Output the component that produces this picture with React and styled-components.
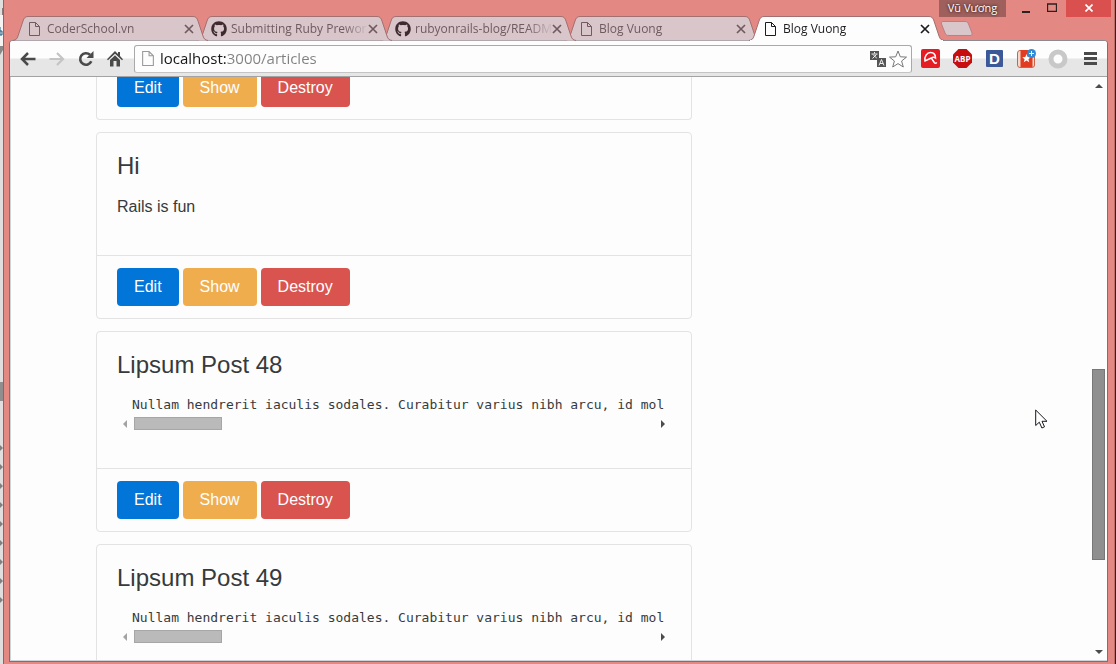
import React from "react";
import styled, { createGlobalStyle } from "styled-components";
import { FaGithub } from "react-icons/fa";

const GlobalStyle = createGlobalStyle`
  * { box-sizing: border-box; }
  body { margin: 0; background: #e0dfdf; }
  button { font: inherit; cursor: pointer; }
`;

const uiFont = `"Open Sans", "Noto Sans", sans-serif`;

const Desktop = styled.div`
  display: grid;
  grid-template-columns: 3px minmax(0, 1fr) 1px;
  height: 100vh;
  overflow: hidden;
`;

const DesktopEdge = styled.div`
  background: ${(p) => (p.$dark ? "#35201f" : "#e0dfdf")};
  overflow: hidden;
`;

const Window = styled.div`
  position: relative;
  display: flex;
  flex-direction: column;
  min-width: 0;
  min-height: 0;
  background: #e38882;
  border-left: 1px solid #9b605c;
  border-right: 1px solid #c06c67;
  padding: 0 6px 2px 5px;
`;

const TitleBar = styled.header`
  flex: none;
  height: 40px;
`;

const TabList = styled.nav`
  display: flex;
  padding: 16px 0 0 4px;
`;

const TabItem = styled.div`
  position: relative;
  z-index: ${(p) => p.$layer};
  display: flex;
  flex: none;
  align-items: center;
  width: 195px;
  height: 25px;
  margin-right: -11px;
  padding: 0 13px 0 16px;
  color: ${(p) => (p.$active ? "#1c1c1c" : "#6f5a5f")};
`;

const TabShape = styled.svg`
  position: absolute;
  inset: 0;
`;

const TabTitle = styled.button`
  position: relative;
  display: flex;
  flex: 1;
  align-items: center;
  min-width: 0;
  height: 24px;
  padding: 0;
  border: 0;
  background: none;
  color: inherit;
  font: 12px/16px ${uiFont};
  white-space: nowrap;
`;

const TabIcon = styled.span`
  display: flex;
  flex: none;
  width: 18px;
  margin-left: ${(p) => (p.$wide ? "-2px" : "0")};
  margin-right: ${(p) => (p.$wide ? "2px" : "0")};
  color: ${(p) => (p.$wide ? "#3d2b2f" : "inherit")};
`;

const TabLabel = styled.span`
  flex: 1;
  overflow: hidden;
  text-align: left;
  mask-image: linear-gradient(to right, #000 112px, transparent 138px);
`;

const TabClose = styled.button`
  position: relative;
  display: flex;
  flex: none;
  width: 12px;
  height: 12px;
  padding: 1px;
  border: 0;
  background: none;
  color: inherit;
`;

const NewTab = styled.button`
  display: flex;
  width: 34px;
  height: 16px;
  margin: 5px 0 0 7px;
  padding: 0;
  border: 0;
  background: none;
`;

const WindowControls = styled.div`
  position: absolute;
  top: 0;
  right: 3px;
  display: flex;
  height: 17px;
`;

const UserBadge = styled.button`
  width: 67px;
  margin-right: 7px;
  padding: 0 0 2px;
  border: 0;
  background: #9f5f5c;
  color: #fff;
  font: 11px/15px ${uiFont};
  text-shadow: 0 0 3px #000;
  white-space: nowrap;
`;

const ControlButton = styled.button`
  display: flex;
  align-items: center;
  justify-content: center;
  width: ${(p) => (p.$danger ? "45px" : "26px")};
  margin-left: ${(p) => (p.$danger ? "1px" : "0")};
  padding: 0 0 2px;
  border: 0;
  background: ${(p) => (p.$danger ? "#d9504e" : "transparent")};
`;

const Frame = styled.div`
  display: flex;
  flex: 1;
  flex-direction: column;
  min-height: 0;
  border: 1px solid #8d6a69;
  border-radius: 4px 4px 0 0;
  border-top-color: #8b8a90;
  background: #fdfdfd;
`;

const Toolbar = styled.div`
  display: flex;
  flex: none;
  align-items: center;
  height: 36px;
  padding: 0 7px 0 8px;
  border-bottom: 1px solid #a3a3a3;
  border-radius: 3px 3px 0 0;
  background: linear-gradient(#fdfdfd 17px, #e6e6e6 18px);
`;

const NavButtons = styled.div`
  display: flex;
  gap: 9px;
  margin-right: 9px;
`;

const IconButton = styled.button`
  display: flex;
  align-items: center;
  justify-content: center;
  width: 20px;
  height: 20px;
  padding: 0;
  border: 0;
  background: none;
`;

const AddressBar = styled.div`
  display: flex;
  flex: 1;
  align-items: center;
  height: 28px;
  padding: 0 3px 0 7px;
  border: 1px solid #a9a9a9;
  border-bottom-color: #c4c4c4;
  border-radius: 3px;
  background: #fdfdfd;
`;

const AddressInput = styled.input`
  flex: 1;
  min-width: 0;
  height: 24px;
  margin-left: 6px;
  padding: 0 0 2px;
  border: 0;
  outline: 0;
  font: 15px/22px ${uiFont};
  background: linear-gradient(to right, #161616 67px, #808080 67px);
  background-clip: text;
  color: transparent;
`;

const Extensions = styled.div`
  display: flex;
  gap: 12px;
  margin-left: 8px;
`;

const Viewport = styled.div`
  display: flex;
  flex: 1;
  min-height: 0;
  border-left: 1px solid #ccd5d8;
  border-bottom: 1px solid #ccd5d8;
`;

const Page = styled.main`
  position: relative;
  flex: 1;
  min-width: 0;
  overflow: hidden;
  color: #373a3c;
  font: 16px/25px "Liberation Sans", Arial, sans-serif;
`;

const Container = styled.div`
  max-width: 940px;
  margin: 0 auto;
`;

const Articles = styled.div`
  display: flex;
  flex-direction: column;
  gap: 12px;
  width: calc(100% * 2 / 3);
  margin-top: -21px;
  padding: 0 16px 0 15px;
`;

const Card = styled.article`
  border: 1px solid #e3e3e3;
  border-top-width: ${(p) => (p.$partial ? "0" : "1px")};
  border-radius: 4px;
`;

const CardBody = styled.div`
  padding: 20px 20px 36px;
`;

const CardTitle = styled.h2`
  margin: 0 0 15px;
  font-size: 24px;
  font-weight: 400;
  line-height: 26px;
`;

const CardText = styled.p`
  margin: 0;
`;

const CodeBlock = styled.pre`
  margin: 0;
  padding: 2px 0 0 15px;
  overflow: hidden;
  font: 13px/20px "DejaVu Sans Mono", monospace;
`;

const HorizontalScroll = styled.div`
  display: flex;
  align-items: center;
  height: 17px;
`;

const ScrollTrack = styled.div`
  flex: 1;
`;

const HorizontalThumb = styled.div`
  width: 88px;
  height: 13px;
  border: 1px solid #a6a6a6;
  background: #bababa;
`;

const ScrollArrow = styled.button`
  display: flex;
  flex: none;
  align-items: center;
  justify-content: center;
  width: 17px;
  height: 17px;
  padding: 0;
  border: 0;
  background: none;
`;

const CardFooter = styled.footer`
  display: flex;
  gap: 4px;
  padding: 12px 20px;
  border-top: 1px solid #e3e3e3;
`;

const tones = { edit: "#0275d8", show: "#f0ad4e", destroy: "#d9534f" };

const ActionButton = styled.button`
  height: 38px;
  padding: 0 17px 2px;
  border: 0;
  border-radius: 4px;
  background: ${(p) => tones[p.$tone]};
  color: #fff;
`;

const VerticalScroll = styled.div`
  display: flex;
  flex: none;
  flex-direction: column;
  align-items: center;
  width: 16px;
`;

const VerticalTrack = styled.div`
  display: flex;
  flex: 1;
  flex-direction: column;
  padding-right: 1px;
`;

const TrackSpace = styled.div`
  flex: ${(p) => p.$share};
`;

const VerticalThumb = styled.div`
  flex: 190;
  width: 13px;
  border: 1px solid #777;
  background: #8f8f8f;
`;

const Cursor = styled.svg`
  position: absolute;
  left: 1024px;
  top: 332px;
`;

function DocIcon() {
  return (
    <svg width="11" height="14" viewBox="0 0 11 14" fill="none" stroke="currentColor">
      <path d="M.5.5h6l4 4v9H.5zM6.5.5v4h4" />
    </svg>
  );
}

function Tab({ title, github, active, layer }) {
  return (
    <TabItem $active={active} $layer={layer}>
      <TabShape width="195" height="25" viewBox="0 0 195 25" aria-hidden="true">
        <path
          d="M0 24.5C3 24 4 23 5 20L10 5C11 2 12 .5 15 .5H180C183 .5 184 2 185 5L190 20C191 23 192 24 195 24.5"
          fill={active ? "#fdfdfd" : "#d8c6cb"}
          stroke="#a36f70"
        />
        {active && <path d="M1 24.5H194" stroke="#fdfdfd" />}
      </TabShape>
      <TabTitle>
        <TabIcon $wide={github}>{github ? <FaGithub size={16} /> : <DocIcon />}</TabIcon>
        <TabLabel>{title}</TabLabel>
      </TabTitle>
      <TabClose aria-label={`Close ${title}`}>
        <svg width="10" height="10" viewBox="0 0 10 10" stroke="currentColor" strokeWidth="1.7">
          <path d="M1 1l8 8M9 1L1 9" />
        </svg>
      </TabClose>
    </TabItem>
  );
}

function Arrow({ direction, color = "#4c4c4c" }) {
  const paths = {
    left: "M6 1v8L2 5z",
    right: "M4 1v8l4-4z",
    up: "M1 7h8L5 3z",
    down: "M1 3h8L5 7z",
  };
  return (
    <ScrollArrow aria-label={`Scroll ${direction}`}>
      <svg width="10" height="10" viewBox="0 0 10 10" fill={color}>
        <path d={paths[direction]} />
      </svg>
    </ScrollArrow>
  );
}

function Actions() {
  return (
    <CardFooter>
      <ActionButton $tone="edit">Edit</ActionButton>
      <ActionButton $tone="show">Show</ActionButton>
      <ActionButton $tone="destroy">Destroy</ActionButton>
    </CardFooter>
  );
}

function Article({ title, text, code, hasActions = true }) {
  return (
    <Card>
      <CardBody>
        <CardTitle>{title}</CardTitle>
        {text && <CardText>{text}</CardText>}
        {code && (
          <>
            <CodeBlock>{code}</CodeBlock>
            <HorizontalScroll>
              <Arrow direction="left" color="#a3a3a3" />
              <ScrollTrack>
                <HorizontalThumb />
              </ScrollTrack>
              <Arrow direction="right" />
            </HorizontalScroll>
          </>
        )}
      </CardBody>
      {hasActions && <Actions />}
    </Card>
  );
}

const tabs = [
  { title: "CoderSchool.vn" },
  { title: "Submitting Ruby Prewor", github: true },
  { title: "rubyonrails-blog/READM", github: true },
  { title: "Blog Vuong" },
  { title: "Blog Vuong", active: true },
];

const lipsum = "Nullam hendrerit iaculis sodales. Curabitur varius nibh arcu, id mol";

const articles = [
  { title: "Hi", text: "Rails is fun" },
  { title: "Lipsum Post 48", code: lipsum },
  { title: "Lipsum Post 49", code: lipsum, hasActions: false },
];

const treeRows = [448, 467, 486, 505, 524, 543, 562, 581, 600];

export default function App() {
  return (
    <Desktop>
      <GlobalStyle />
      <DesktopEdge>
        <svg width="3" height="664" viewBox="0 0 3 664" aria-hidden="true">
          <path d="M2 8h1v8H2z" fill="#8a7a78" />
          <path d="M0 15h3v34H0z" fill="#f4f4f4" />
          <path d="M0 27v8M0 31h2v4H0" stroke="#205a80" fill="none" />
          <path d="M0 46h3v4l-3 5z" fill="#888" />
          <path d="M0 382h3v19H0z" fill="#8f8f8f" />
          {treeRows.map((y) => (
            <path key={y} d={`M0 ${y - 3}l3 3-3 3z`} fill="#808080" />
          ))}
        </svg>
      </DesktopEdge>
      <Window>
        <TitleBar>
          <TabList aria-label="Tabs">
            {tabs.map((tab, i) => (
              <Tab key={i} {...tab} layer={tab.active ? 10 : 6 - i} />
            ))}
            <NewTab aria-label="New tab">
              <svg width="34" height="16" viewBox="0 0 34 16">
                <path
                  d="M3 .5h22c2 0 3 1 3.500 2.500l3.500 9c.5 2-.5 2.500-2 2.500H9c-2 0-3-.5-4-2.500l-3.500-9C1 1.500 1.500 .5 3 .5z"
                  fill="#d8c6cb"
                  stroke="#b98084"
                />
              </svg>
            </NewTab>
          </TabList>
          <WindowControls>
            <UserBadge>Vũ Vương</UserBadge>
            <ControlButton aria-label="Minimize">
              <svg width="10" height="10"><path d="M1 8h8v2H1z" fill="#2c2020" /></svg>
            </ControlButton>
            <ControlButton aria-label="Maximize">
              <svg width="10" height="9"><path d="M.5 1v7.500h9V1M0 1h10" stroke="#2c2020" strokeWidth="1.300" fill="none" /></svg>
            </ControlButton>
            <ControlButton $danger aria-label="Close window">
              <svg width="8" height="8"><path d="M.5.5l7 7m0-7l-7 7" stroke="#fff" strokeWidth="1.700" /></svg>
            </ControlButton>
          </WindowControls>
        </TitleBar>
        <Frame>
          <Toolbar>
            <NavButtons>
              <IconButton aria-label="Back">
                <svg width="16" height="14" fill="none" stroke="#4a4a4a" strokeWidth="2.500"><path d="M15.500 7H2.500M8 1L2 7l6 6" /></svg>
              </IconButton>
              <IconButton aria-label="Forward" disabled>
                <svg width="16" height="14" fill="none" stroke="#c4c4c4" strokeWidth="2.200"><path d="M.5 7h13M8 1l6 6-6 6" /></svg>
              </IconButton>
              <IconButton aria-label="Reload">
                <svg width="16" height="16" viewBox="0 0 16 16">
                  <path d="M13.300 10.300A5.800 5.800 0 1 1 12 3.800" fill="none" stroke="#4a4a4a" strokeWidth="2.600" />
                  <path d="M15.500 0v7h-7z" fill="#4a4a4a" />
                </svg>
              </IconButton>
              <IconButton aria-label="Home">
                <svg width="16" height="16" viewBox="0 0 16 16" fill="#4a4a4a">
                  <path d="M8 0l3 3V1h2v4l3 3.300-1 1L8 2.700 1 9.300l-1-1z" />
                  <path d="M3 9l5-4.700L13 9v6.500H9.500V10h-3v5.500H3z" />
                </svg>
              </IconButton>
            </NavButtons>
            <AddressBar>
              <svg width="12" height="15" viewBox="0 0 11 14" fill="none" stroke="#999"><path d="M.5.5h6l4 4v9H.5zM6.500.5v4h4" /></svg>
              <AddressInput aria-label="Address" defaultValue="localhost:3000/articles" />
              <IconButton aria-label="Translate">
                <svg width="16" height="16" viewBox="0 0 16 16">
                  <path d="M0 0h9v9H0z" fill="#555" />
                  <path d="M4.500 1v1.500M1.500 3h6M3 3.500l4 4M6.500 3.500l-4 4" stroke="#eee" fill="none" />
                  <path d="M7 7h9v9H7z" fill="#555" />
                  <path d="M9 14.500l2.500-6 2.500 6M10 12.500h3" stroke="#eee" fill="none" />
                </svg>
              </IconButton>
              <IconButton aria-label="Bookmark">
                <svg width="18" height="18" viewBox="0 0 18 18" fill="#fff" stroke="#777">
                  <path d="M9 1l2.300 5.800 6.200.3-4.900 3.900 1.700 6L9 13.600 3.700 17l1.700-6L.5 7.100l6.200-.3z" />
                </svg>
              </IconButton>
            </AddressBar>
            <Extensions>
              <IconButton aria-label="Avira">
                <svg width="19" height="19" viewBox="0 0 19 19">
                  <rect width="19" height="19" rx="2" fill="#e51c23" />
                  <path d="M4 12C3 7.500 6 3.500 9.500 3.500s5 2.500 5 5.500c-1.500-1-3-.8-4.200 0L4 12z" fill="none" stroke="#fff" strokeWidth="1.500" />
                  <path d="M10.300 9l3 4.500c.7 1 1.500 1 2.500 0" fill="none" stroke="#fff" strokeWidth="1.500" />
                </svg>
              </IconButton>
              <IconButton aria-label="Adblock Plus">
                <svg width="19" height="19" viewBox="0 0 19 19">
                  <path d="M5.500 0h8L19 5.500v8L13.500 19h-8L0 13.500v-8z" fill="#c70d0f" />
                  <text x="9.500" y="13" fill="#fff" fontSize="8" fontWeight="700" textAnchor="middle" fontFamily="Open Sans, sans-serif">ABP</text>
                </svg>
              </IconButton>
              <IconButton aria-label="D extension">
                <svg width="17" height="17" viewBox="0 0 17 17" overflow="visible">
                  <rect width="17" height="17" rx="1" fill="#3b5998" />
                  <text x="8.500" y="14" fill="#fff" fontSize="15" fontWeight="700" textAnchor="middle" fontFamily="Liberation Sans, sans-serif">D</text>
                </svg>
              </IconButton>
              <IconButton aria-label="Add to favourites">
                <svg width="19" height="19" viewBox="0 0 19 19">
                  <rect x=".5" y="1.500" width="17" height="17" rx="2.500" fill="#f3d9cb" stroke="#c86549" />
                  <rect x="3.500" y="1" width="12" height="17" fill="#e13c22" />
                  <path d="M9.500 5l1.200 3 3 .2-2.300 2 .8 3-2.700-1.700-2.700 1.700.8-3-2.300-2 3-.2z" fill="#fff" />
                  <circle cx="14.500" cy="4.500" r="4.500" fill="#2e8bd8" />
                  <path d="M14.500 2v5M12 4.500h5" stroke="#fff" />
                </svg>
              </IconButton>
              <IconButton aria-label="Inactive extension">
                <svg width="20" height="20"><circle cx="10" cy="10" r="7" fill="#fdfdfd" stroke="#c8c8c8" strokeWidth="5" /></svg>
              </IconButton>
              <IconButton aria-label="Menu">
                <svg width="13" height="13" stroke="#4a4a4a" strokeWidth="3"><path d="M0 1.500h13M0 6.500h13M0 11.500h13" /></svg>
              </IconButton>
            </Extensions>
          </Toolbar>
          <Viewport>
            <Page>
              <Container>
                <Articles>
                  <Card $partial>
                    <Actions />
                  </Card>
                  {articles.map((article) => (
                    <Article key={article.title} {...article} />
                  ))}
                </Articles>
              </Container>
              <Cursor width="13" height="20" viewBox="0 0 13 20" aria-hidden="true">
                <path d="M.7 1v15.500l3.600-3.300 2.600 5.800 2.600-1.200L7 12.300h5z" fill="#fff" stroke="#16161f" />
              </Cursor>
            </Page>
            <VerticalScroll>
              <Arrow direction="up" />
              <VerticalTrack>
                <TrackSpace $share={276} />
                <VerticalThumb />
                <TrackSpace $share={83} />
              </VerticalTrack>
              <Arrow direction="down" />
            </VerticalScroll>
          </Viewport>
        </Frame>
      </Window>
      <DesktopEdge $dark />
    </Desktop>
  );
}
